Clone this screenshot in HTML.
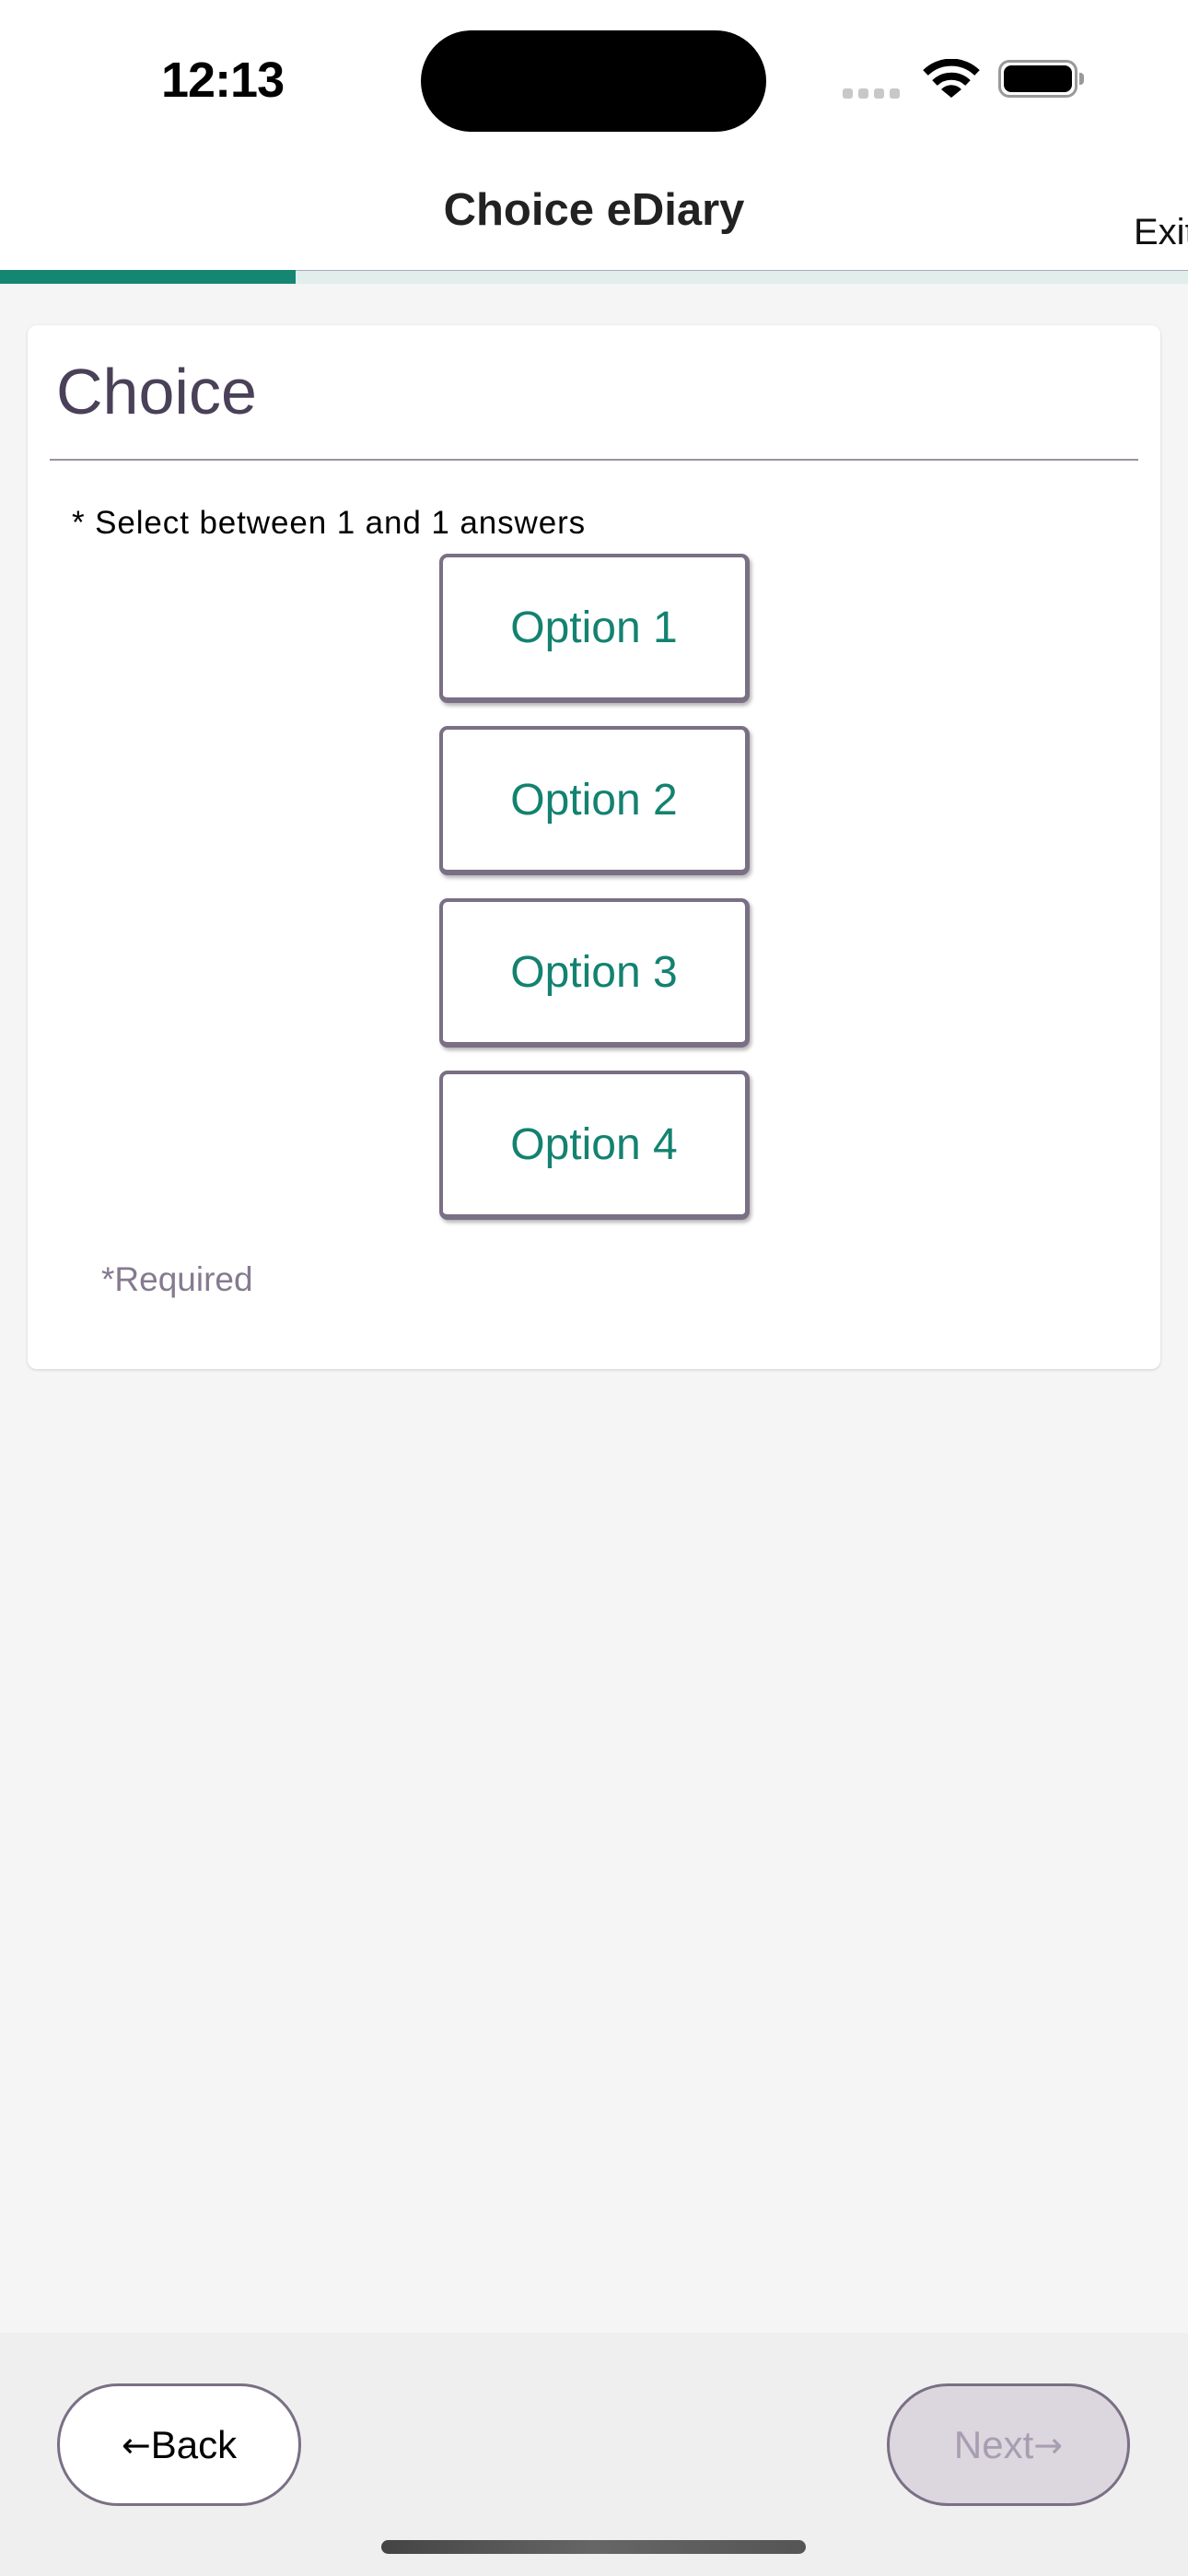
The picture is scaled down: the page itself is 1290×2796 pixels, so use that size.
<!DOCTYPE html>
<html><head><meta charset="utf-8"><style>
*{margin:0;padding:0;box-sizing:border-box}
body{width:1290px;height:2796px;background:#f5f5f5;font-family:"Liberation Sans",sans-serif;position:relative;overflow:hidden}
.abs{position:absolute}
.opt{position:absolute;left:477px;width:337px;height:162px;background:#fff;border:4px solid #7a6f85;border-bottom-width:6px;border-right-width:5px;border-radius:9px;box-shadow:2px 3px 4px rgba(0,0,0,0.3);color:#138270;font-size:48px;display:flex;align-items:center;justify-content:center}
.ar{font-family:"DejaVu Sans",sans-serif;font-size:38px}
</style></head><body>
<div class="abs" style="left:0;top:0;width:1290px;height:293px;background:#fff"></div>
<div class="abs" style="left:175px;top:56px;font-size:54px;font-weight:bold;color:#000;letter-spacing:-1px">12:13</div>
<div class="abs" style="left:457px;top:33px;width:375px;height:110px;background:#000;border-radius:55px"></div>
<div class="abs" style="left:915px;top:96px;width:11px;height:11px;background:#c8c8c8;border-radius:3px"></div>
<div class="abs" style="left:932px;top:96px;width:11px;height:11px;background:#c8c8c8;border-radius:3px"></div>
<div class="abs" style="left:949px;top:96px;width:11px;height:11px;background:#c8c8c8;border-radius:3px"></div>
<div class="abs" style="left:966px;top:96px;width:11px;height:11px;background:#c8c8c8;border-radius:3px"></div>
<svg class="abs" style="left:1002px;top:64px" width="62" height="44" viewBox="0 0 62 44">
<path d="M3 15 A40 40 0 0 1 59 15" fill="none" stroke="#000" stroke-width="8"/>
<path d="M13 26 A26 26 0 0 1 49 26" fill="none" stroke="#000" stroke-width="8"/>
<path d="M31 42 L20 33 A15 15 0 0 1 42 33 Z" fill="#000"/>
</svg>
<div class="abs" style="left:1084px;top:65px;width:86px;height:41px;border:3px solid #999;border-radius:12px"></div>
<div class="abs" style="left:1090px;top:71px;width:74px;height:29px;background:#000;border-radius:8px"></div>
<div class="abs" style="left:1172px;top:79px;width:5px;height:13px;background:#999;border-radius:0 4px 4px 0"></div>
<div class="abs" style="left:0;top:200px;width:1290px;text-align:center;font-size:49px;font-weight:bold;color:#222">Choice eDiary</div>
<div class="abs" style="left:1231px;top:230px;font-size:40px;color:#111">Exit</div>
<div class="abs" style="left:0;top:293px;width:1290px;height:15px;background:#e1eeeb;border-top:1px solid #aab"></div>
<div class="abs" style="left:0;top:293px;width:321px;height:15px;background:#158672"></div>
<div class="abs" style="left:30px;top:353px;width:1230px;height:1133px;background:#fff;border-radius:10px;box-shadow:0 1px 3px rgba(0,0,0,0.15)"></div>
<div class="abs" style="left:61px;top:385px;font-size:70px;color:#4a4158">Choice</div>
<div class="abs" style="left:54px;top:498px;width:1182px;height:2px;background:#9a90a4"></div>
<div class="abs" style="left:78px;top:548px;font-size:35px;color:#000;letter-spacing:0.9px">* Select between 1 and 1 answers</div>
<div class="opt" style="top:601px">Option 1</div>
<div class="opt" style="top:788px">Option 2</div>
<div class="opt" style="top:975px">Option 3</div>
<div class="opt" style="top:1162px">Option 4</div>
<div class="abs" style="left:110px;top:1368px;font-size:37px;color:#857a8f">*Required</div>
<div class="abs" style="left:0;top:2532px;width:1290px;height:264px;background:#efefef"></div>
<div class="abs" style="left:62px;top:2587px;width:265px;height:133px;background:#fff;border:3px solid #7a6f85;border-radius:66px;display:flex;align-items:center;justify-content:center;font-size:42px;color:#000"><span class="ar">←</span>Back</div>
<div class="abs" style="left:963px;top:2587px;width:264px;height:133px;background:#dcd6de;border:3px solid #7a6f85;border-radius:66px;display:flex;align-items:center;justify-content:center;font-size:42px;color:#a99db2">Next<span class="ar">→</span></div>
<div class="abs" style="left:414px;top:2757px;width:461px;height:15px;background:linear-gradient(90deg,#444,#666,#555);border-radius:8px"></div>
</body></html>
